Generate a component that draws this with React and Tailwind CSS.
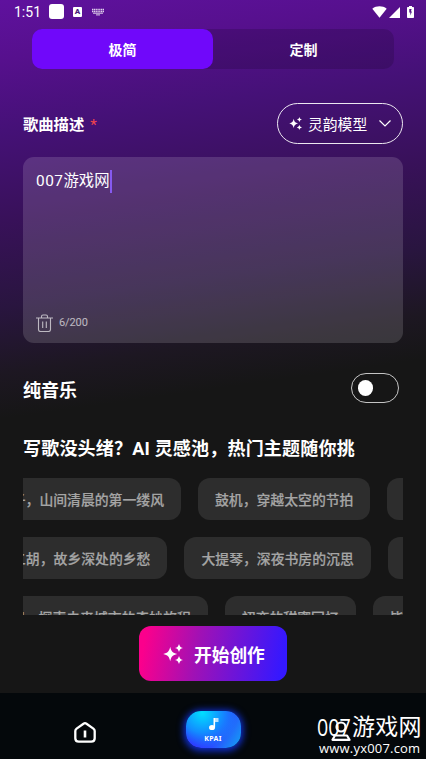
import { useState } from 'react'

const ideaRows = [
  { shift: '-ml-[56px]', items: ['竹笛子，山间清晨的第一缕风', '鼓机，穿越太空的节拍', '口琴，夏日的街角'] },
  { shift: '-ml-[28px]', items: ['二胡，故乡深处的乡愁', '大提琴，深夜书房的沉思', '钢琴，雨后的窗台'] },
  { shift: '-ml-[43px]', items: ['时间，探索未来城市的奇妙旅程', '初恋的甜蜜回忆', '毕业季的告别'] },
]

const Sparkles = ({ className }) => (
  <svg viewBox="0 0 20 20" fill="currentColor" className={className}>
    <path d="M7.200 2.800C8.300 7.600 9.600 8.900 14.200 10c-4.600 1.100-5.900 2.400-7 7.200C6.100 12.400 4.800 11.100.200 10c4.600-1.100 5.900-2.400 7-7.200Z" />
    <path d="M16 0c.8 2.600 1.400 3.200 4 4-2.600.8-3.200 1.400-4 4-.8-2.600-1.400-3.200-4-4 2.600-.8 3.200-1.400 4-4Z" />
    <path d="M16 12c.8 2.600 1.400 3.200 4 4-2.600.8-3.200 1.400-4 4-.8-2.600-1.400-3.200-4-4 2.600-.8 3.200-1.400 4-4Z" />
  </svg>
)

const StatusBar = () => (
  <div className="flex h-[23px] items-center pl-[14px] pr-[13px]">
    <span className="w-[35px] text-[14px] leading-none">1:51</span>
    <span className="h-[15px] w-[15px] rounded-[3px] bg-white" />
    <span className="ml-[9px] flex h-[10px] w-[9px] items-center justify-center rounded-[1px] bg-white text-[8px] font-black leading-none text-[#4b1a7c]">A</span>
    <svg viewBox="0 0 12 8" className="ml-[10px] h-2 w-3" fill="none" stroke="white" strokeOpacity=".8">
      <path d="M0 1.500h12M0 3.500h12" strokeDasharray="1.300 .5" strokeWidth="1.300" />
      <path d="M1 5.200h10M4 6.900h4" strokeWidth="1" />
    </svg>
    <div className="-mr-[1px] ml-auto flex items-end">
      <svg viewBox="0 0 15 12" className="h-3 w-[15px]" fill="white">
        <path d="M.3 2.700C4.500-.500 10.500-.500 14.700 2.700L7.500 11.800Z" />
      </svg>
      <svg viewBox="0 0 11 11" className="ml-[2px] h-[11px] w-[11px]" fill="white">
        <path d="M11 0v11H0Z" />
      </svg>
      <svg viewBox="0 0 7 12" className="ml-[7px] h-3 w-[7px]">
        <path d="M2 0h3v1h1.200q.8 0 .8.800v9.400q0 .8-.8.800H.8q-.8 0-.8-.8V1.800Q0 1 .8 1H2Z" fill="white" />
        <path d="M4.600 3H2.300v3.500h1V9.500L5 5.500H3.900Z" fill="#53128a" />
      </svg>
    </div>
  </div>
)

const BottomNav = () => (
  <nav className="relative flex h-[66px] shrink-0 bg-[#04080b]">
    <div className="flex w-[170px] justify-center pt-[29px]">
      <svg viewBox="0 0 22 21" className="h-[21px] w-[22px]" fill="none" stroke="white" strokeWidth="2.300" strokeLinecap="round" strokeLinejoin="round">
        <path d="M9.500 1.700 2.600 6.600Q1.300 7.600 1.300 9v7.200q0 3.500 3.500 3.500h12.400q3.500 0 3.500-3.500V9q0-1.400-1.300-2.400l-6.900-4.900q-1.500-1-3 0Z" />
        <path d="M11 8.500v7" strokeWidth="2.600" strokeLinecap="butt" />
      </svg>
    </div>
    <div className="flex w-[86px] justify-center pt-[18px]">
      <div className="flex h-[37px] w-[55px] flex-col items-center rounded-[15px] bg-[radial-gradient(circle_at_30%_5%,#00e0ff_0%,#128dff_38%,transparent_68%),linear-gradient(120deg,#3520ff_20%,#2a4cff_60%,#1599f5_95%)] shadow-[0_1px_7px_2px_#1030d8]">
        <svg viewBox="0 0 12 14" className="ml-[2px] mt-[6px] h-[14px] w-3" fill="white">
          <ellipse cx="4" cy="10.500" rx="3" ry="2.600" />
          <path d="M5.500 1h1.600v9.500H5.500Z" />
          <path d="M7 1h3.500v4H7Z" opacity=".7" />
        </svg>
        <span className="mt-[4px] font-['Noto_Sans'] text-[7px] font-bold leading-none tracking-[0.300px]">KPAI</span>
      </div>
    </div>
    <div className="flex w-[170px] justify-center pt-[28px]">
      <svg viewBox="0 0 20 21" className="h-[21px] w-5" fill="none" stroke="white" strokeWidth="2.200">
        <circle cx="10" cy="6" r="4.500" />
        <path d="M4 14.500h12l2.500 4.300H1.500Z" strokeLinejoin="round" />
      </svg>
    </div>
    <div className="absolute left-[317px] top-[20px] w-[109px] whitespace-nowrap">
      <div className="flex h-[28px] items-center leading-none">
        <span className="inline-block w-[35px] origin-left scale-x-[0.82] font-['Open_Sans','Noto_Sans',sans-serif] text-[24px]">007</span>
        <span className="text-[23px] tracking-[0.300px]">游戏网</span>
      </div>
      <div className="pl-[2px] font-['Open_Sans',sans-serif] text-[13px] leading-[14px] tracking-[0.200px]">www.yx007.com</div>
    </div>
  </nav>
)

const App = () => {
  const [mode, setMode] = useState('simple')
  const [text, setText] = useState('007游戏网')
  const [instrumental, setInstrumental] = useState(false)

  return (
    <div className="flex h-[759px] w-[426px] flex-col overflow-hidden bg-[#161616] bg-[linear-gradient(172deg,#5f119e_0px,#56108d_60px,#451177_130px,#381159_220px,#29153f_305px,#1d1722_370px,#161616_415px)] font-[Roboto,'Noto_Sans_CJK_SC',sans-serif] text-white">
      <StatusBar />

      <div className="mx-8 mt-[6px] flex h-10 w-[362px] shrink-0 rounded-[10px] bg-black/15 text-[14px] font-bold">
        <button onClick={() => setMode('simple')} className={`w-1/2 rounded-[10px] pt-[3px] ${mode === 'simple' ? 'bg-[#7008fa]' : ''}`}>极简</button>
        <button onClick={() => setMode('custom')} className={`w-1/2 rounded-[10px] pt-[3px] ${mode === 'custom' ? 'bg-[#7008fa]' : ''}`}>定制</button>
      </div>

      <main className="flex h-[546px] shrink-0 flex-col overflow-hidden px-[23px] pt-[34px]">
        <div className="flex h-[41px] shrink-0 items-center justify-between">
          <h2 className="pt-[3px] text-[15.300px] font-bold">歌曲描述<span className="ml-[6px] font-normal text-[#f0454d]">*</span></h2>
          <button className="flex h-[41px] w-[126px] items-center rounded-full border border-white/90 pl-[11px]">
            <Sparkles className="h-[13px] w-[13px]" />
            <span className="ml-[6px] pt-[3px] text-[14.800px]">灵韵模型</span>
            <svg viewBox="0 0 12 7" className="ml-[12px] h-[7px] w-3" fill="none" stroke="white" strokeWidth="1.200">
              <path d="m.5.500 5.500 5.500L11.500.500" />
            </svg>
          </button>
        </div>

        <div className="mt-[13px] flex h-[186px] shrink-0 flex-col rounded-[11px] bg-white/[0.14] pl-[13px]">
          <div className="mt-[12px] flex h-[24px] items-center">
            <span className="pt-[2px] text-[15.400px] leading-none"><span className="tracking-[0.500px]">{text.slice(0, 3)}</span>{text.slice(3)}</span>
            <span className="h-[23px] w-[2.500px] shrink-0 bg-[#865af0]" />
          </div>
          <button onClick={() => setText('')} className="mb-[11px] mt-auto flex items-center text-[11px] tracking-[-0.100px] text-white/65">
            <svg viewBox="0 0 17 18" className="mr-[6px] h-[18px] w-[17px]" fill="none" stroke="currentColor" strokeWidth="1.100">
              <path d="M0 4h17M5.500 4V2.500Q5.500 1 7 1h3q1.500 0 1.500 1.500V4M2.500 4v11.500q0 2 2 2h8q2 0 2-2V4" />
              <path d="M6.700 7.500v6.500M10.300 7.500v6.500" />
            </svg>
            {text.length}/200
          </button>
        </div>

        <div className="mt-[29px] flex h-[32px] shrink-0 items-center justify-between pr-[4px]">
          <h2 className="pt-[4px] text-[18px] font-bold">纯音乐</h2>
          <button onClick={() => setInstrumental(!instrumental)} className={`flex h-[30px] w-[48px] items-center rounded-full border border-white/75 px-[5.500px] ${instrumental ? 'justify-end' : ''}`}>
            <span className="h-[15.500px] w-[15.500px] rounded-full bg-white" />
          </button>
        </div>

        <h2 className="mt-[31px] h-[28px] shrink-0 whitespace-nowrap text-[18px] font-bold leading-[28px] tracking-[0.200px]">写歌没头绪？AI 灵感池，热门主题随你挑</h2>

        <div className="mt-[15px] flex flex-col gap-[17px] overflow-hidden">
          {ideaRows.map((row, i) => (
            <div key={i} className={`flex shrink-0 gap-[17px] ${row.shift}`}>
              {row.items.map((idea) => (
                <button key={idea} className="h-[42px] shrink-0 whitespace-nowrap rounded-[12px] bg-[#2d2d2d] px-[17px] pt-[2px] text-[13.850px] font-medium text-[#a5a5a5] [-webkit-text-stroke:0.200px_#a5a5a5]">{idea}</button>
              ))}
            </div>
          ))}
        </div>
      </main>

      <div className="flex h-[78px] shrink-0 justify-center pt-[11px]">
        <button className="flex h-[55px] w-[148px] items-center rounded-[12px] bg-[linear-gradient(100deg,#fb008c_5%,#a011b5_40%,#3518ff_95%)] pl-[24px]">
          <Sparkles className="h-[20px] w-[20px]" />
          <span className="ml-[11px] pt-[5px] text-[17.700px] font-bold">开始创作</span>
        </button>
      </div>

      <BottomNav />
    </div>
  )
}

export default App
